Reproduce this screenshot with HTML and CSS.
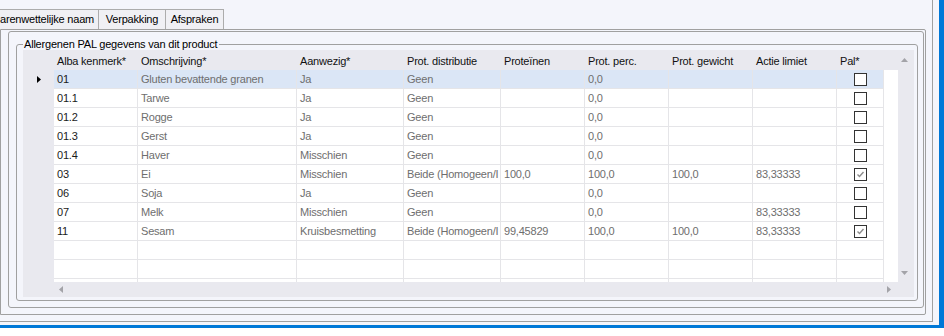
FILE: index.html
```
<!DOCTYPE html>
<html lang="nl">
<head>
    <meta charset="UTF-8">
    <title>Allergenen PAL</title>
    <link rel="stylesheet" href="styles.css">
</head>
<body>
    <div class="window">
        <div class="tabctl">
            <div class="tabs">
                <div class="tab tab-first">arenwettelijke naam</div>
                <div class="tab tab-pack">Verpakking</div>
                <div class="tab tab-deal">Afspraken</div>
            </div>
            <div class="tabpage">
                <div class="panel">
                    <fieldset class="group">
                        <legend>Allergenen PAL gegevens van dit product</legend>
                        <div class="grid">
                            <div class="grid-view">
                                <table>
                                    <colgroup>
                                        <col class="c-rh">
                                        <col class="c-id">
                                        <col class="c-desc">
                                        <col class="c-pres">
                                        <col class="c-dist">
                                        <col class="c-num">
                                        <col class="c-num">
                                        <col class="c-num">
                                        <col class="c-num">
                                        <col class="c-pal">
                                        <col class="c-fill">
                                    </colgroup>
                                    <thead>
                                        <tr>
                                            <th></th>
                                            <th>Alba kenmerk*</th>
                                            <th>Omschrijving*</th>
                                            <th>Aanwezig*</th>
                                            <th>Prot. distributie</th>
                                            <th>Proteïnen</th>
                                            <th>Prot. perc.</th>
                                            <th>Prot. gewicht</th>
                                            <th>Actie limiet</th>
                                            <th>Pal*</th>
                                            <th></th>
                                        </tr>
                                    </thead>
                                    <tbody>
                                        <tr class="sel">
                                            <td class="rh"><i class="cur"></i></td>
                                            <td class="id">01</td>
                                            <td>Gluten bevattende granen</td>
                                            <td>Ja</td>
                                            <td>Geen</td>
                                            <td></td>
                                            <td>0,0</td>
                                            <td></td>
                                            <td></td>
                                            <td class="pal"><span class="chk"></span></td>
                                            <td class="fill"></td>
                                        </tr>
                                        <tr>
                                            <td class="rh"></td>
                                            <td class="id">01.1</td>
                                            <td>Tarwe</td>
                                            <td>Ja</td>
                                            <td>Geen</td>
                                            <td></td>
                                            <td>0,0</td>
                                            <td></td>
                                            <td></td>
                                            <td class="pal"><span class="chk"></span></td>
                                            <td class="fill"></td>
                                        </tr>
                                        <tr>
                                            <td class="rh"></td>
                                            <td class="id">01.2</td>
                                            <td>Rogge</td>
                                            <td>Ja</td>
                                            <td>Geen</td>
                                            <td></td>
                                            <td>0,0</td>
                                            <td></td>
                                            <td></td>
                                            <td class="pal"><span class="chk"></span></td>
                                            <td class="fill"></td>
                                        </tr>
                                        <tr>
                                            <td class="rh"></td>
                                            <td class="id">01.3</td>
                                            <td>Gerst</td>
                                            <td>Ja</td>
                                            <td>Geen</td>
                                            <td></td>
                                            <td>0,0</td>
                                            <td></td>
                                            <td></td>
                                            <td class="pal"><span class="chk"></span></td>
                                            <td class="fill"></td>
                                        </tr>
                                        <tr>
                                            <td class="rh"></td>
                                            <td class="id">01.4</td>
                                            <td>Haver</td>
                                            <td>Misschien</td>
                                            <td>Geen</td>
                                            <td></td>
                                            <td>0,0</td>
                                            <td></td>
                                            <td></td>
                                            <td class="pal"><span class="chk"></span></td>
                                            <td class="fill"></td>
                                        </tr>
                                        <tr>
                                            <td class="rh"></td>
                                            <td class="id">03</td>
                                            <td>Ei</td>
                                            <td>Misschien</td>
                                            <td>Beide (Homogeen/I</td>
                                            <td>100,0</td>
                                            <td>100,0</td>
                                            <td>100,0</td>
                                            <td>83,33333</td>
                                            <td class="pal"><span class="chk on"><svg viewBox="0 0 11 11" width="11" height="11"><path d="M2.5 5.5 L4.5 7.5 L8.5 3" fill="none" stroke="#8c8c8c" stroke-width="1.4"/></svg></span></td>
                                            <td class="fill"></td>
                                        </tr>
                                        <tr>
                                            <td class="rh"></td>
                                            <td class="id">06</td>
                                            <td>Soja</td>
                                            <td>Ja</td>
                                            <td>Geen</td>
                                            <td></td>
                                            <td>0,0</td>
                                            <td></td>
                                            <td></td>
                                            <td class="pal"><span class="chk"></span></td>
                                            <td class="fill"></td>
                                        </tr>
                                        <tr>
                                            <td class="rh"></td>
                                            <td class="id">07</td>
                                            <td>Melk</td>
                                            <td>Misschien</td>
                                            <td>Geen</td>
                                            <td></td>
                                            <td>0,0</td>
                                            <td></td>
                                            <td>83,33333</td>
                                            <td class="pal"><span class="chk"></span></td>
                                            <td class="fill"></td>
                                        </tr>
                                        <tr>
                                            <td class="rh"></td>
                                            <td class="id">11</td>
                                            <td>Sesam</td>
                                            <td>Kruisbesmetting</td>
                                            <td>Beide (Homogeen/I</td>
                                            <td>99,45829</td>
                                            <td>100,0</td>
                                            <td>100,0</td>
                                            <td>83,33333</td>
                                            <td class="pal"><span class="chk on"><svg viewBox="0 0 11 11" width="11" height="11"><path d="M2.5 5.5 L4.5 7.5 L8.5 3" fill="none" stroke="#8c8c8c" stroke-width="1.4"/></svg></span></td>
                                            <td class="fill"></td>
                                        </tr>
                                        <tr>
                                            <td class="rh"></td>
                                            <td></td><td></td><td></td><td></td><td></td><td></td><td></td><td></td><td></td>
                                            <td class="fill"></td>
                                        </tr>
                                        <tr>
                                            <td class="rh"></td>
                                            <td></td><td></td><td></td><td></td><td></td><td></td><td></td><td></td><td></td>
                                            <td class="fill"></td>
                                        </tr>
                                        <tr>
                                            <td class="rh"></td>
                                            <td></td><td></td><td></td><td></td><td></td><td></td><td></td><td></td><td></td>
                                            <td class="fill"></td>
                                        </tr>
                                    </tbody>
                                </table>
                            </div>
                            <div class="vscroll"><i class="arrow up"></i><i class="arrow down"></i></div>
                            <div class="hscroll"><i class="arrow left"></i><i class="arrow right"></i></div>
                            <div class="corner"></div>
                        </div>
                    </fieldset>
                </div>
            </div>
        </div>
    </div>
</body>
</html>
```

FILE: styles.css
```
body {
    margin: 0;
    background-color: #ffffff;
    font-family: "Liberation Sans", Arial, sans-serif;
    font-size: 11px;
    letter-spacing: -0.2px;
    color: #000;
}
.window {
    width: 944px;
    height: 328px;
    box-sizing: border-box;
    background-color: #f4f5fb;
    border-right: 5px solid #0078d7;
    border-bottom: 3px solid #0078d7;
    overflow: hidden;
}
.tabctl {
    width: 933px;
    height: 322px;
    box-sizing: border-box;
    border-right: 1px solid #a0a0a0;
    border-bottom: 1px solid #a0a0a0;
}
.tabs {
    display: flex;
    height: 29px;
    padding-top: 9px;
    box-sizing: border-box;
}
.tab {
    height: 20px;
    box-sizing: border-box;
    border-top: 1px solid #acacac;
    border-right: 1px solid #acacac;
    background-color: #f0f0f4;
    line-height: 19px;
    white-space: nowrap;
    overflow: hidden;
}
.tab-first {
    width: 99px;
}
.tab-pack {
    width: 67px;
    text-align: center;
}
.tab-deal {
    width: 58px;
    text-align: center;
}
.tabpage {
    width: 926px;
    height: 286px;
    box-sizing: border-box;
    border: 1px solid #a0a0a0;
    border-radius: 0 2px 2px 0;
    padding: 1px 0 0 7px;
}
.panel {
    width: 916px;
    height: 277px;
    box-sizing: border-box;
    border: 1px solid #a0a0a0;
    border-radius: 3px;
    padding: 6px 5px 6px 7px;
}
.group {
    margin: 0;
    padding: 0 3px 3px 6px;
    border: 1px solid #a0a0a0;
    border-radius: 3px;
    min-width: 0;
}
.group legend {
    padding: 0 2px 0 1px;
    height: 12px;
    line-height: 12px;
}
.grid {
    display: grid;
    grid-template-columns: 875px 16px;
    grid-template-rows: 232px 15px;
    background-color: #e9e9ef;
}
.grid-view {
    overflow: hidden;
}
.grid-view table {
    table-layout: fixed;
    width: 875px;
    border-spacing: 0;
}
.c-rh { width: 31px; }
.c-id { width: 84px; }
.c-desc { width: 159px; }
.c-pres { width: 107px; }
.c-dist { width: 97px; }
.c-num { width: 84px; }
.c-pal { width: 47px; }
.c-fill { width: 14px; }
th {
    height: 18px;
    padding: 2px 3px 0;
    line-height: 18px;
    font-weight: normal;
    text-align: left;
    white-space: nowrap;
    overflow: hidden;
    color: #111;
}
td {
    height: 18px;
    padding: 0 3px;
    line-height: 18px;
    background-color: #fff;
    color: #6e6e6e;
    border-right: 1px solid #e5e5e8;
    border-bottom: 1px solid #e5e5e8;
    white-space: nowrap;
    overflow: hidden;
}
td.rh {
    background-color: transparent;
    border: 0;
    padding: 0 0 0 14px;
}
td.fill {
    border: 0;
}
td.id {
    color: #1a1a1a;
}
td.pal {
    padding: 0;
}
tr.sel td:not(.rh):not(.fill) {
    background-color: #dbe6f6;
}
.cur {
    display: block;
    width: 4px;
    height: 7px;
    background-color: #000;
    clip-path: polygon(0 0, 100% 50%, 0 100%);
}
.chk {
    display: block;
    width: 13px;
    height: 13px;
    box-sizing: border-box;
    margin: 0 auto;
    border: 1px solid #333;
    background-color: #fff;
}
.chk svg {
    display: block;
}
.vscroll {
    display: flex;
    flex-direction: column;
    justify-content: space-between;
    padding: 8px 0 7px 3px;
}
.hscroll {
    display: flex;
    justify-content: space-between;
    align-items: center;
    padding: 0 7px 0 36px;
}
.arrow {
    display: block;
    background-color: #a3a3a8;
}
.up {
    width: 7px;
    height: 4px;
    clip-path: polygon(50% 0, 100% 100%, 0 100%);
}
.down {
    width: 7px;
    height: 4px;
    clip-path: polygon(0 0, 100% 0, 50% 100%);
}
.left {
    width: 4px;
    height: 7px;
    clip-path: polygon(100% 0, 100% 100%, 0 50%);
}
.right {
    width: 4px;
    height: 7px;
    clip-path: polygon(0 0, 100% 50%, 0 100%);
}
```
